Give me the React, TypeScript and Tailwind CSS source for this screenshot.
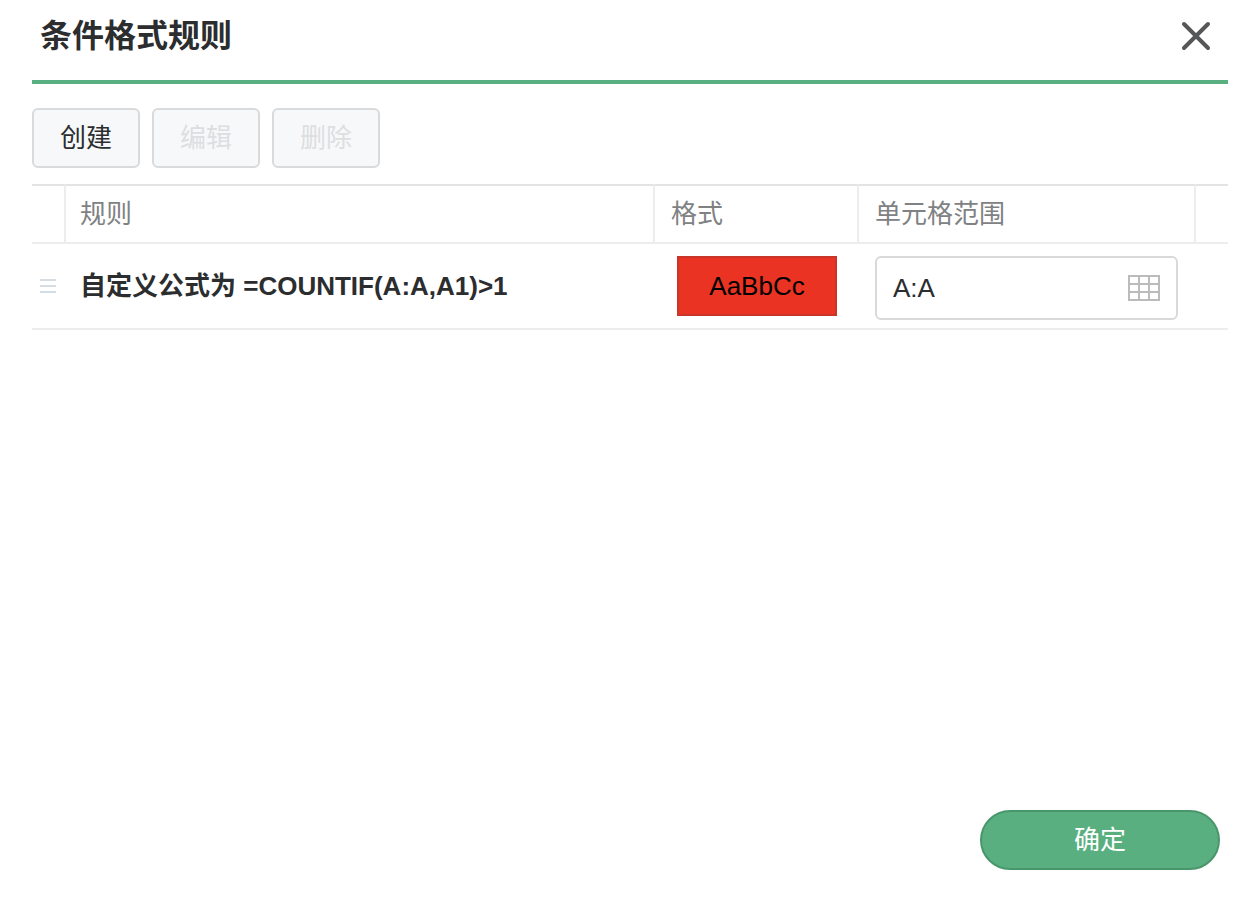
import { useState } from "react";

type Rule = { id: number; label: string; sample: string; range: string };

const initialRules: Rule[] = [
  { id: 1, label: "自定义公式为 =COUNTIF(A:A,A1)>1", sample: "AaBbCc", range: "A:A" },
];

function CloseIcon() {
  return (
    <svg width="32" height="32" viewBox="0 0 32 32" fill="none" stroke="#555658" strokeWidth="4" strokeLinecap="round" aria-hidden="true">
      <path d="M4 4 28 28M28 4 4 28" />
    </svg>
  );
}

function DragIcon() {
  return (
    <svg className="block" width="16" height="14" viewBox="0 0 16 14" fill="#d3dde3" aria-hidden="true">
      <path d="M0 0h16v2H0zM0 6h16v2H0zM0 12h16v2H0z" />
    </svg>
  );
}

function GridIcon() {
  return (
    <svg className="block" width="32" height="26" viewBox="0 0 32 26" fill="none" stroke="#bbbbbb" strokeWidth="2" aria-hidden="true">
      <path d="M1 1H31V25H1ZM11 1V25M21 1V25M1 9H31M1 17H31" />
    </svg>
  );
}

function ToolButton({ label, disabled }: { label: string; disabled?: boolean }) {
  return (
    <button
      type="button"
      disabled={disabled}
      className="h-15 rounded-md border-2 border-[#d9dadc] bg-[#f7f8fa] px-[26px] text-[#2b2d2f] disabled:text-[#dddee0]"
    >
      {label}
    </button>
  );
}

export default function App() {
  const [rules, setRules] = useState(initialRules);

  const updateRange = (id: number, range: string) =>
    setRules(rules.map((rule) => (rule.id === id ? { ...rule, range } : rule)));

  return (
    <main className="flex min-h-screen flex-col bg-white px-8 font-['Liberation_Sans','Noto_Sans_CJK_SC',sans-serif] text-[26px] leading-8 text-[#2b2d2f]">
      <header className="flex h-21 items-start justify-between border-b-4 border-[#5aaf80] px-2 pt-3">
        <h1 className="text-[32px] leading-12 font-bold">条件格式规则</h1>
        <button type="button" aria-label="关闭" className="flex size-12 items-center justify-center">
          <CloseIcon />
        </button>
      </header>

      <div className="flex gap-3 pt-6 pb-4">
        <ToolButton label="创建" />
        <ToolButton label="编辑" disabled />
        <ToolButton label="删除" disabled />
      </div>

      <table className="w-full table-fixed border-separate border-spacing-0 text-left">
        <colgroup>
          <col className="w-[34px]" />
          <col />
          <col className="w-[204px]" />
          <col className="w-[337px]" />
          <col className="w-8" />
        </colgroup>
        <thead className="text-[#808183]">
          <tr className="h-15">
            <td className="border-y-2 border-r-2 border-[#ededed] border-t-[#e3e3e3]" />
            <th scope="col" className="border-y-2 border-r-2 border-[#ededed] border-t-[#e3e3e3] pl-3.5 font-normal">规则</th>
            <th scope="col" className="border-y-2 border-r-2 border-[#ededed] border-t-[#e3e3e3] pl-4 font-normal">格式</th>
            <th scope="col" className="border-y-2 border-r-2 border-[#ededed] border-t-[#e3e3e3] pl-4 font-normal">单元格范围</th>
            <td className="border-y-2 border-[#ededed] border-t-[#e3e3e3]" />
          </tr>
        </thead>
        <tbody>
          {rules.map((rule) => (
            <tr key={rule.id}>
              <td className="border-b-2 border-[#ededed] pl-2">
                <DragIcon />
              </td>
              <td className="border-b-2 border-[#ededed] pl-3.5 font-bold">{rule.label}</td>
              <td className="border-b-2 border-[#ededed] pt-3 pl-[22px] align-top">
                <div className="flex h-15 w-40 items-center justify-center border-2 border-[#c93529] bg-[#ea3323] text-black">
                  {rule.sample}
                </div>
              </td>
              <td className="border-b-2 border-[#ededed] pt-3 pr-[18px] pb-2 pl-4">
                <div className="flex h-16 items-center rounded-md border-2 border-[#d9d9d9] px-4">
                  <input
                    type="text"
                    aria-label="单元格范围"
                    value={rule.range}
                    onChange={(event) => updateRange(rule.id, event.target.value)}
                    className="min-w-0 flex-1 outline-none"
                  />
                  <button type="button" aria-label="选择范围">
                    <GridIcon />
                  </button>
                </div>
              </td>
              <td className="border-b-2 border-[#ededed]" />
            </tr>
          ))}
        </tbody>
      </table>

      <footer className="mt-auto flex justify-end pr-2 pb-[30px]">
        <button type="button" className="h-15 w-60 rounded-full border-2 border-[#4a966b] bg-[#5aaf80] text-white">
          确定
        </button>
      </footer>
    </main>
  );
}
